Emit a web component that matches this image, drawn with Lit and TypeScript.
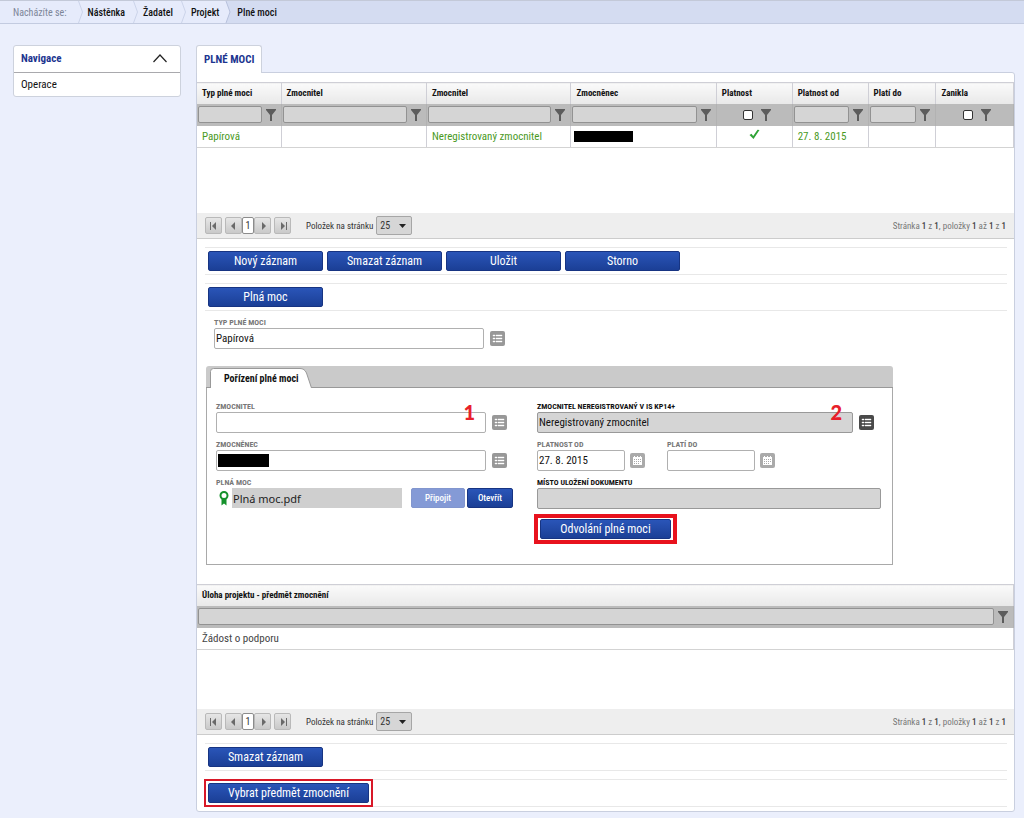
import { LitElement, html, css, svg, nothing } from "lit";
import { customElement, property } from "lit/decorators.js";
import { classMap } from "lit/directives/class-map.js";

const controls = css`
  * {
    box-sizing: border-box;
  }
  button,
  input,
  select {
    font-family: inherit;
    color: inherit;
    margin: 0;
  }
  svg {
    display: block;
    flex: none;
  }
`;

const funnel = () => html`<svg width="10" height="12" viewBox="0 0 10 12" aria-hidden="true">
  ${svg`<path d="M0 0h10v1L6 6v6H4V6L0 1z" fill="#5c5c5c"/>`}
</svg>`;

const listIcon = () => html`<svg width="15" height="15" viewBox="0 0 15 15" aria-hidden="true">
  ${svg`<path d="M3 4h2v1H3zM6 4h6v1H6zM3 7h2v1H3zM6 7h6v1H6zM3 10h2v1H3zM6 10h6v1H6z" fill="#fff" stroke="#fff" stroke-width=".4"/>`}
</svg>`;

const calendarIcon = () => html`<svg width="15" height="15" viewBox="0 0 15 15" aria-hidden="true">
  ${svg`<path d="M3 4h1V3h1v1h2V3h1v1h2V3h1v1h1v8H3z" fill="#fff"/>
  <path d="M4 6h1v1H4zM6 6h1v1H6zM8 6h1v1H8zM10 6h1v1h-1zM4 8h1v1H4zM6 8h1v1H6zM8 8h1v1H8zM10 8h1v1h-1zM4 10h1v1H4zM6 10h1v1H6zM8 10h1v1H8z" fill="#aaa"/>`}
</svg>`;

const ribbonIcon = () => html`<svg width="10" height="15" viewBox="0 0 10 15" aria-hidden="true">
  ${svg`<path d="M2.500 8h5v6.500L5 12.500 2.500 14.500z" fill="#14912b"/>
  <circle cx="5" cy="4.500" r="3.500" fill="#fff" stroke="#14912b" stroke-width="2"/>`}
</svg>`;

const checkIcon = () => html`<svg width="11" height="11" viewBox="0 0 11 11" role="img" aria-label="Ano">
  ${svg`<path d="M.5 6l2-1.300 1.700 2.300L8.500.800 10.500 1 4.500 10z" fill="#2fa336"/>`}
</svg>`;

const crumbArrow = () => html`<svg width="5" height="22" viewBox="0 0 5 22" aria-hidden="true">
  ${svg`<path d="M.5 0L4.500 11 .5 22" fill="none" stroke="#cbd3ea"/>`}
</svg>`;

const currentArrow = () => html`<svg width="9" height="22" viewBox="0 0 9 22" aria-hidden="true">
  ${svg`<path d="M0 0h4l4 11-4 11H0z" fill="#e6ebfb"/><path d="M4 0l4 11-4 11" fill="none" stroke="#b7c1dc"/>`}
</svg>`;

const pagerPaths: Record<string, string> = {
  first: "M1 1h1v8H1zM3 5l4-4v8z",
  prev: "M2 5l4-4v8z",
  next: "M4 1l4 4-4 4z",
  last: "M3 1l4 4-4 4zM8 1h1v8H8z",
};

@customElement("grid-pager")
class GridPager extends LitElement {
  static styles = [
    controls,
    css`
      :host {
        display: block;
      }
      .pager {
        display: flex;
        align-items: center;
        height: 26px;
        padding: 0 8px;
        background: #eeeeee;
        border-bottom: 1px solid #cccccc;
        font-size: 9px;
        color: #333333;
      }
      .step,
      .page {
        display: flex;
        align-items: center;
        justify-content: center;
        width: 17px;
        height: 17px;
        padding: 0;
        border: 1px solid #b9b9b9;
        border-radius: 2px;
        background: linear-gradient(#e6e6e6, #c9c9c9);
      }
      .page {
        width: 12px;
        background: #ffffff;
        border-color: #8c8c8c;
        font-size: 10px;
      }
      .outer-start {
        margin-right: 3px;
      }
      .outer-end {
        margin-left: 3px;
      }
      .size {
        display: flex;
        align-items: center;
        gap: 3px;
        margin-left: 15px;
      }
      .pick {
        position: relative;
      }
      select {
        appearance: none;
        display: block;
        width: 36px;
        height: 19px;
        padding: 0 3px;
        border: 1px solid #a6a6a6;
        border-radius: 2px;
        background: #d6d6d6;
        font-size: 10px;
      }
      .pick svg {
        position: absolute;
        right: 6px;
        top: 8px;
        pointer-events: none;
      }
      .info {
        margin-left: auto;
        color: #777777;
      }
      .info b {
        color: #444444;
        font-weight: 500;
      }
    `,
  ];

  private step(kind: string, label: string, extra = "") {
    return html`<button class="step ${extra}" aria-label=${label}>
      <svg width="10" height="10" viewBox="0 0 10 10" aria-hidden="true">
        ${svg`<path d=${pagerPaths[kind]} fill="#6a6a6a"/>`}
      </svg>
    </button>`;
  }

  render() {
    return html`<div class="pager">
      ${this.step("first", "První stránka", "outer-start")} ${this.step("prev", "Předchozí stránka")}
      <button class="page">1</button>
      ${this.step("next", "Další stránka")} ${this.step("last", "Poslední stránka", "outer-end")}
      <div class="size">
        <label for="size">Položek na stránku</label>
        <div class="pick">
          <select id="size"><option>25</option></select>
          <svg width="7" height="4" viewBox="0 0 7 4" aria-hidden="true">${svg`<path d="M0 0h7L3.500 4z" fill="#222"/>`}</svg>
        </div>
      </div>
      <div class="info">Stránka <b>1</b> z <b>1</b>, položky <b>1</b> až <b>1</b> z <b>1</b></div>
    </div>`;
  }
}

interface Column {
  title: string;
  width: number;
  filter: "text" | "check";
  value?: unknown;
}

@customElement("data-grid")
class DataGrid extends LitElement {
  @property({ attribute: false }) columns: Column[] = [];
  @property({ type: Boolean }) active = false;

  static styles = [
    controls,
    css`
      :host {
        display: block;
        min-height: 131px;
      }
      table {
        width: 100%;
        table-layout: fixed;
        border-collapse: collapse;
      }
      th,
      td {
        padding: 0;
        text-align: left;
        border-right: 1px solid #cfcfd6;
      }
      .head th {
        height: 21px;
        padding: 0 5px;
        border-top: 1px solid #cfcfd6;
        background: linear-gradient(#fafafa, #e8e8e8);
        font-size: 9px;
        font-weight: 700;
        color: #111111;
        white-space: nowrap;
      }
      .filters td {
        height: 22px;
        background: #bbbbbb;
        border-right-color: #b2b2b2;
      }
      .filter {
        display: flex;
        align-items: center;
        gap: 4px;
        padding: 0 5px 0 1px;
      }
      .filter.check {
        justify-content: center;
        gap: 8px;
        padding: 0 0 0 5px;
      }
      .text {
        flex: 1;
        min-width: 0;
        height: 17px;
        border: 1px solid #929292;
        border-radius: 2px;
        background: #d5d5d5;
        font-size: 10px;
      }
      .box {
        appearance: none;
        width: 10px;
        height: 10px;
        border: 1px solid #333333;
        border-radius: 2px;
        background: #ffffff;
      }
      .row td {
        height: 22px;
        padding: 0 5px;
        border-bottom: 1px solid #d3d3d3;
        font-size: 11px;
        color: #444444;
        white-space: nowrap;
      }
      .row.active td {
        color: #4a9a1e;
      }
      .row .bare {
        padding: 0 3px;
      }
      .redacted {
        width: 59px;
        height: 11px;
        background: #000000;
      }
      .row svg {
        margin: 0 auto 3px;
      }
    `,
  ];

  render() {
    return html`<table>
      <colgroup>
        ${this.columns.map((c) => html`<col style="width:${c.width}%" />`)}
      </colgroup>
      <thead>
        <tr class="head">
          ${this.columns.map((c) => html`<th scope="col">${c.title}</th>`)}
        </tr>
        <tr class="filters">
          ${this.columns.map(
            (c) => html`<td>
              <div class=${classMap({ filter: true, check: c.filter === "check" })}>
                ${c.filter === "check"
                  ? html`<input class="box" type="checkbox" aria-label=${c.title} />`
                  : html`<input class="text" type="text" aria-label=${c.title} />`}
                ${funnel()}
              </div>
            </td>`
          )}
        </tr>
      </thead>
      <tbody>
        <tr class=${classMap({ row: true, active: this.active })}>
          ${this.columns.map((c) =>
            c.value === "redacted"
              ? html`<td class="bare"><div class="redacted"></div></td>`
              : c.value === "yes"
                ? html`<td>${checkIcon()}</td>`
                : html`<td>${c.value ?? nothing}</td>`
          )}
        </tr>
      </tbody>
    </table>`;
  }
}

const authColumns: Column[] = [
  { title: "Typ plné moci", width: 10.3, filter: "text", value: "Papírová" },
  { title: "Zmocnitel", width: 17.8, filter: "text" },
  { title: "Zmocnitel", width: 17.7, filter: "text", value: "Neregistrovaný zmocnitel" },
  { title: "Zmocněnec", width: 17.8, filter: "text", value: "redacted" },
  { title: "Platnost", width: 9.3, filter: "check", value: "yes" },
  { title: "Platnost od", width: 9.3, filter: "text", value: "27. 8. 2015" },
  { title: "Platí do", width: 8.3, filter: "text" },
  { title: "Zanikla", width: 9.5, filter: "check" },
];

const taskColumns: Column[] = [
  { title: "Úloha projektu - předmět zmocnění", width: 100, filter: "text", value: "Žádost o podporu" },
];

@customElement("app-root")
class AppRoot extends LitElement {
  static styles = [
    controls,
    css`
      :host {
        display: block;
        min-height: 100vh;
        background: #ebeffc;
        font-family: "Roboto Condensed", Roboto, "Liberation Sans", sans-serif;
        font-size: 11px;
        color: #111111;
      }
      .crumbs {
        display: flex;
        height: 24px;
        padding-left: 13px;
        border-top: 1px solid #c3c9d8;
        border-bottom: 1px solid #c3cbe0;
        background: #d4dcf1;
        font-size: 10px;
        line-height: 23px;
      }
      .trail {
        display: flex;
        gap: 5px;
        margin-left: -13px;
        padding-left: 13px;
        background: #e6ebfb;
      }
      .crumbs a {
        color: #111111;
        font-weight: 500;
        text-decoration: none;
      }
      .trail a {
        padding-right: 3px;
      }
      .lead {
        color: #7d8699;
        margin-right: 6px;
      }
      .current {
        margin-left: 6px;
      }
      .page {
        display: grid;
        grid-template-columns: 168px minmax(0, 1fr);
        gap: 15px;
        align-items: start;
        padding: 21px 9px 6px 13px;
      }
      .nav {
        border: 1px solid #cdd2dd;
        border-radius: 3px;
        background: #ffffff;
      }
      .nav-head {
        display: flex;
        align-items: center;
        justify-content: space-between;
        width: 100%;
        height: 27px;
        padding: 0 13px 2px 7px;
        border: 0;
        border-bottom: 1px solid #a9a9ad;
        background: none;
        font-size: 11px;
        font-weight: 700;
        color: #1c3590;
      }
      .nav-item {
        display: block;
        padding: 0 7px;
        font-size: 11px;
        line-height: 23px;
        color: #111111;
        text-decoration: none;
      }
      .tab {
        display: inline-block;
        height: 28px;
        padding: 0 7px;
        border: 1px solid #cdd2dd;
        border-bottom: 0;
        border-radius: 3px 3px 0 0;
        background: #ffffff;
        font-size: 11px;
        font-weight: 700;
        color: #1c3590;
      }
      .tabs {
        display: flex;
        height: 27px;
        position: relative;
      }
      .panel {
        padding: 9px 0 4px;
        border: 1px solid #c9cfdf;
        border-radius: 0 3px 3px 3px;
        background: #ffffff;
      }
      .bar {
        display: flex;
        gap: 4px;
        margin: 8px 7px 0 8px;
        padding: 3px;
        border: 1px solid #e8e8e8;
        border-width: 1px 0;
      }
      .btn {
        width: 115px;
        height: 20px;
        padding: 0;
        border: 1px solid #173482;
        border-radius: 2px;
        background: linear-gradient(#2a55b8, #1b3f96);
        font-size: 12px;
        line-height: 18px;
        color: #ffffff;
      }
      .btn.wide {
        width: 161px;
      }
      .btn.medium {
        width: 131px;
      }
      .btn.small {
        width: 46px;
        font-size: 9px;
        font-weight: 500;
      }
      .btn.small.off {
        width: 54px;
        border-color: #8296ce;
        background: #849ad6;
      }
      .mark {
        position: relative;
      }
      .mark::after {
        content: "";
        position: absolute;
        inset: -4px;
        border: 2px solid #d81828;
        pointer-events: none;
      }
      .mark.thick::after {
        inset: -5px -6px;
        border: 4px solid #e8121d;
      }
      .field {
        display: flex;
        flex-direction: column;
        min-width: 0;
      }
      .field label,
      .caption {
        height: 10px;
        font-size: 8px;
        line-height: 10px;
        font-weight: 700;
        color: #777777;
        white-space: nowrap;
      }
      .field.strong label {
        color: #111111;
      }
      .field.inset {
        margin-right: 7px;
      }
      .control {
        display: flex;
        align-items: center;
        gap: 6px;
        position: relative;
      }
      .input {
        flex: 1;
        min-width: 0;
        height: 21px;
        padding: 0 1px;
        border: 1px solid #b0b0b0;
        border-radius: 2px;
        background: #ffffff;
        font-size: 11px;
      }
      .input.grey {
        background: #d5d5d5;
        border-color: #999999;
      }
      .icon {
        flex: none;
        width: 15px;
        height: 15px;
        padding: 0;
        border: 0;
        border-radius: 2px;
        background: #989898;
      }
      .icon.pale {
        background: #aaaaaa;
      }
      .icon.dark {
        background: #4a4a4a;
      }
      .kind {
        width: 291px;
        margin: 7px 0 17px 17px;
      }
      .form {
        max-width: 687px;
        margin: 0 9px 19px;
      }
      .form-tabs {
        display: flex;
        height: 22px;
        padding: 2px 4px 0;
        border-bottom: 1px solid #999999;
        border-radius: 3px 3px 0 0;
        background: #cacaca;
      }
      .form-tab {
        position: relative;
        width: 102px;
        height: 20px;
        padding: 0 13px 0 14px;
        border: 0;
        background: none;
        font-size: 10px;
        font-weight: 700;
        text-align: left;
        white-space: nowrap;
      }
      .form-tab svg {
        position: absolute;
        left: 0;
        top: 0;
      }
      .form-tab span {
        position: relative;
      }
      .form-body {
        display: grid;
        grid-template-columns: 291px minmax(0, 344px);
        gap: 30px;
        padding: 14px 9px 22px;
        border: 1px solid #a9a9a9;
        border-top: 0;
      }
      .column {
        display: flex;
        flex-direction: column;
        gap: 7px;
      }
      .hide {
        position: absolute;
        left: 2px;
        top: 4px;
        width: 51px;
        height: 13px;
        background: #000000;
      }
      .note {
        position: absolute;
        right: 32px;
        top: -12px;
        font: 900 20px/24px Lato, sans-serif;
        color: #e8202a;
      }
      .dates {
        display: flex;
        gap: 22px;
      }
      .dates .field {
        width: 108px;
      }
      .dates .control {
        gap: 5px;
      }
      .file {
        display: flex;
        align-items: center;
        gap: 2px;
        width: 297px;
      }
      .file svg {
        margin: 0 1px 0 3px;
      }
      .name {
        flex: 1;
        height: 20px;
        padding-left: 1px;
        background: #cfcfcf;
        font: 11px/21px "Noto Sans", "Open Sans", sans-serif;
        color: #222222;
      }
      .name + .btn {
        margin-left: 7px;
      }
      .revoke {
        display: flex;
        padding: 3px;
      }
      .tasks {
        min-height: 125px;
      }
    `,
  ];

  private lookup(kind: "" | "dark" | "pale", label: string) {
    return html`<button class="icon ${kind}" aria-label=${label}>
      ${kind === "pale" ? calendarIcon() : listIcon()}
    </button>`;
  }

  render() {
    return html`
      <nav class="crumbs" aria-label="Nacházíte se">
        <div class="trail">
          <span class="lead">Nacházíte se:</span>
          ${crumbArrow()}<a href="#">Nástěnka</a> ${crumbArrow()}<a href="#">Žadatel</a>
          ${crumbArrow()}<a href="#">Projekt</a>
        </div>
        ${currentArrow()}
        <a class="current" href="#">Plné moci</a>
      </nav>
      <div class="page">
        <aside class="nav">
          <button class="nav-head">
            <span>Navigace</span>
            <svg width="14" height="9" viewBox="0 0 14 9" aria-hidden="true">
              ${svg`<path d="M.5 8L7 1l6.500 7" fill="none" stroke="#222" stroke-width="1.200"/>`}
            </svg>
          </button>
          <a class="nav-item" href="#">Operace</a>
        </aside>
        <main>
          <div class="tabs"><button class="tab">PLNÉ MOCI</button></div>
          <div class="panel">
            <data-grid .columns=${authColumns} active></data-grid>
            <grid-pager></grid-pager>
            <div class="bar">
              <button class="btn">Nový záznam</button>
              <button class="btn">Smazat záznam</button>
              <button class="btn">Uložit</button>
              <button class="btn">Storno</button>
            </div>
            <div class="bar"><button class="btn">Plná moc</button></div>
            <div class="field kind">
              <label for="kind">TYP PLNÉ MOCI</label>
              <div class="control">
                <input class="input" id="kind" type="text" .value=${"Papírová"} />
                ${this.lookup("", "Vybrat typ")}
              </div>
            </div>
            <section class="form">
              <div class="form-tabs">
                <button class="form-tab">
                  <svg width="102" height="20" viewBox="0 0 102 20" aria-hidden="true">
                    ${svg`<path d="M.5 20V3.500Q.5.500 3.500.500H90Q94.500.500 96.500 5L101.500 20" fill="#fff" stroke="#999"/>`}
                  </svg>
                  <span>Pořízení plné moci</span>
                </button>
              </div>
              <div class="form-body">
                <div class="column">
                  <div class="field">
                    <label for="grantor">ZMOCNITEL</label>
                    <div class="control">
                      <input class="input" id="grantor" type="text" />
                      ${this.lookup("", "Vybrat zmocnitele")}
                      <span class="note">1</span>
                    </div>
                  </div>
                  <div class="field">
                    <label for="agent">ZMOCNĚNEC</label>
                    <div class="control">
                      <input class="input" id="agent" type="text" />
                      ${this.lookup("", "Vybrat zmocněnce")}
                      <span class="hide"></span>
                    </div>
                  </div>
                  <div>
                    <div class="caption">PLNÁ MOC</div>
                    <div class="file">
                      ${ribbonIcon()}
                      <span class="name">Plná moc.pdf</span>
                      <button class="btn small off">Připojit</button>
                      <button class="btn small">Otevřít</button>
                    </div>
                  </div>
                </div>
                <div class="column">
                  <div class="field strong inset">
                    <label for="unregistered">ZMOCNITEL NEREGISTROVANÝ V IS KP14+</label>
                    <div class="control">
                      <input class="input grey" id="unregistered" type="text" .value=${"Neregistrovaný zmocnitel"} />
                      ${this.lookup("dark", "Vybrat neregistrovaného zmocnitele")}
                      <span class="note">2</span>
                    </div>
                  </div>
                  <div class="dates">
                    <div class="field">
                      <label for="from">PLATNOST OD</label>
                      <div class="control">
                        <input class="input" id="from" type="text" .value=${"27. 8. 2015"} />
                        ${this.lookup("pale", "Kalendář")}
                      </div>
                    </div>
                    <div class="field">
                      <label for="to">PLATÍ DO</label>
                      <div class="control">
                        <input class="input" id="to" type="text" />
                        ${this.lookup("pale", "Kalendář")}
                      </div>
                    </div>
                  </div>
                  <div class="field strong">
                    <label for="place">MÍSTO ULOŽENÍ DOKUMENTU</label>
                    <div class="control"><input class="input grey" id="place" type="text" /></div>
                  </div>
                  <div class="revoke">
                    <div class="mark thick"><button class="btn medium">Odvolání plné moci</button></div>
                  </div>
                </div>
              </div>
            </section>
            <data-grid class="tasks" .columns=${taskColumns}></data-grid>
            <grid-pager></grid-pager>
            <div class="bar"><button class="btn">Smazat záznam</button></div>
            <div class="bar">
              <div class="mark"><button class="btn wide">Vybrat předmět zmocnění</button></div>
            </div>
          </div>
        </main>
      </div>
    `;
  }
}
